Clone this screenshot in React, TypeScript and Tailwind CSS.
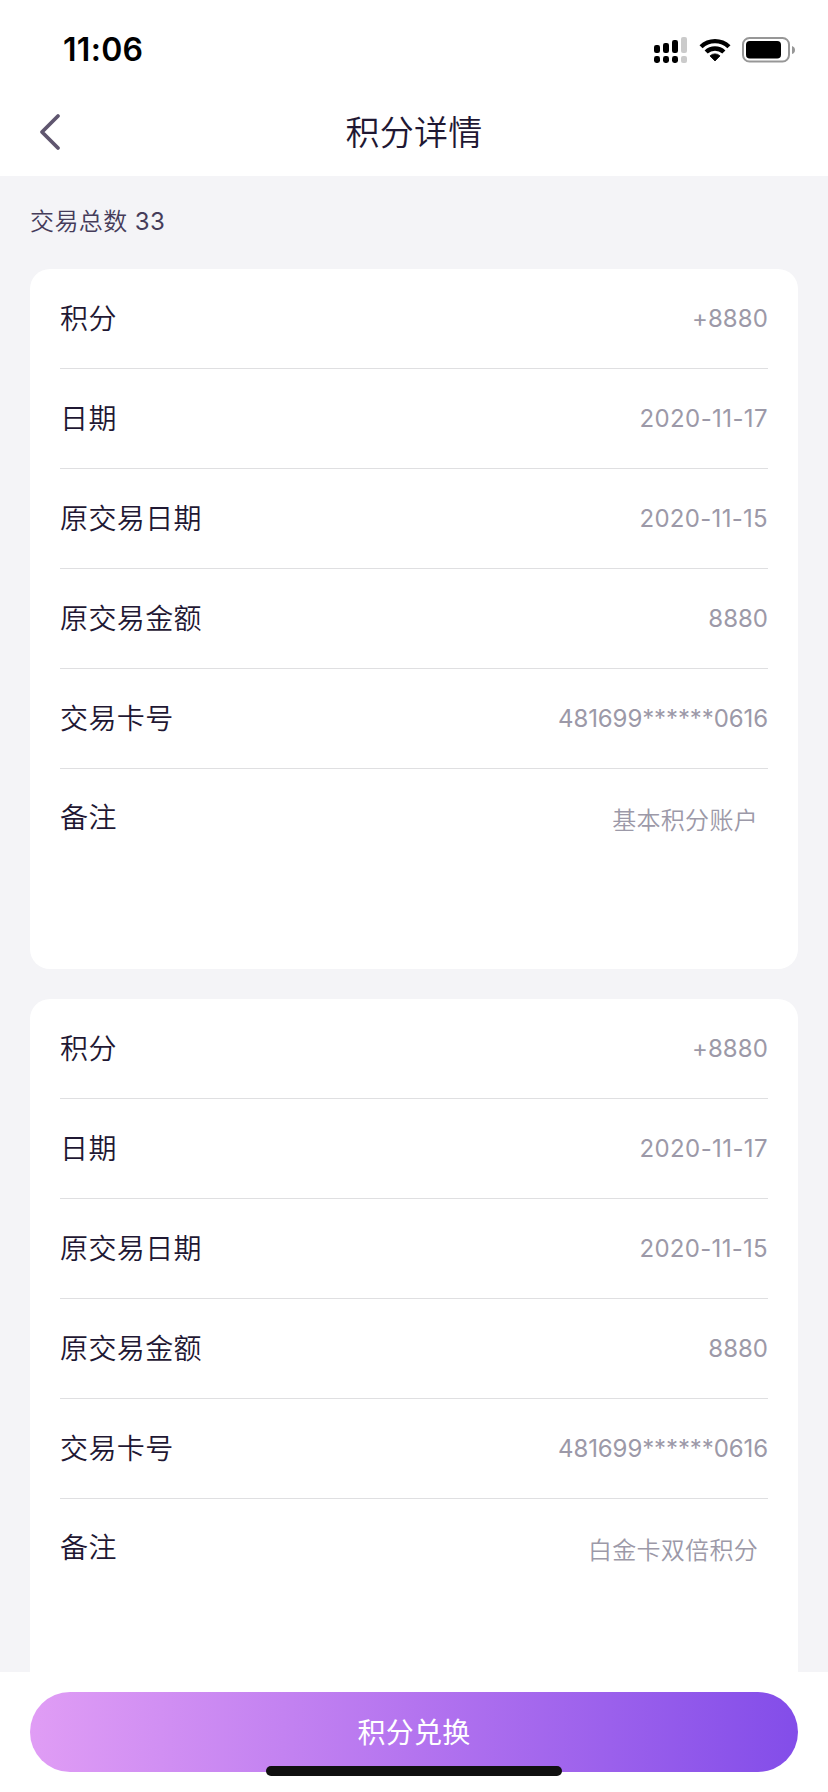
type PointRecord = {
  points: string
  date: string
  originDate: string
  amount: string
  card: string
  remark: string
}

const records: PointRecord[] = [
  {
    points: "+8880",
    date: "2020-11-17",
    originDate: "2020-11-15",
    amount: "8880",
    card: "481699******0616",
    remark: "基本积分账户",
  },
  {
    points: "+8880",
    date: "2020-11-17",
    originDate: "2020-11-15",
    amount: "8880",
    card: "481699******0616",
    remark: "白金卡双倍积分",
  },
]

function SignalIcon() {
  return (
    <svg width="33" height="26" viewBox="0 0 33 26">
      <g fill="#000">
        <rect x="0" y="8" width="6" height="8" rx="2.2" />
        <rect x="9" y="6" width="6" height="10" rx="2.2" />
        <rect x="18" y="3" width="6" height="13" rx="2.2" />
        <rect x="0" y="19" width="6" height="7" rx="2.4" />
        <rect x="9" y="19" width="6" height="7" rx="2.4" />
        <rect x="18" y="19" width="6" height="7" rx="2.4" />
      </g>
      <g fill="#cbcbcb">
        <rect x="27" y="0" width="6" height="16" rx="2" />
        <rect x="27" y="19" width="6" height="7" rx="2" />
      </g>
    </svg>
  )
}

function WifiIcon() {
  return (
    <svg width="32" height="24" viewBox="0 0 32 24">
      <path d="M0.5 7.2A22.3 22.3 0 0 1 31.5 7.2L28.4 10.3A17.9 17.9 0 0 0 3.6 10.3Z" />
      <path d="M5.6 12.5A15 15 0 0 1 26.4 12.5L23.3 15.6A10.6 10.6 0 0 0 8.7 15.6Z" />
      <path d="M11 17.9A7.2 7.2 0 0 1 21 17.9L16 23Z" stroke="#000" strokeWidth="0.8" strokeLinejoin="round" />
    </svg>
  )
}

function BatteryIcon() {
  return (
    <svg width="54" height="26" viewBox="0 0 54 26">
      <rect x="1" y="1" width="46" height="23.5" rx="6.5" fill="none" stroke="#979797" strokeWidth="2" />
      <rect x="4" y="4" width="35" height="17.5" rx="3.8" fill="#000" />
      <path d="M50 9Q53 10 53 13Q53 16 50 17Z" fill="#979797" />
    </svg>
  )
}

function Header() {
  return (
    <header className="h-[176px] bg-white">
      <div className="flex h-[88px] items-center justify-between pl-[63px] pr-8 pt-[11px]">
        <span className="text-[32px] font-semibold leading-none tracking-[0.3px] text-black">11:06</span>
        <div className="flex items-center">
          <SignalIcon />
          <div className="ml-3">
            <WifiIcon />
          </div>
          <div className="ml-[11px]">
            <BatteryIcon />
          </div>
        </div>
      </div>
      <div className="grid h-[88px] grid-cols-[100px_1fr_100px] items-center">
        <svg className="ml-[38px]" width="24" height="38" viewBox="0 0 24 38">
          <path
            d="M20 3L4 19L20 35"
            fill="none"
            stroke="#5f566f"
            strokeWidth="3.8"
            strokeLinecap="round"
            strokeLinejoin="round"
          />
        </svg>
        <h1 className="pt-0.5 text-center text-[34px] font-[350] leading-none tracking-[0.2px] text-[#1f1833]">
          积分详情
        </h1>
      </div>
    </header>
  )
}

function Row({ label, value, valueClass = "" }: { label: string; value: string; valueClass?: string }) {
  return (
    <div className="flex h-[100px] items-center justify-between border-b border-[#dfdfe1]">
      <span className="pt-px text-[28px] tracking-[0.4px] text-[#1f1833]">{label}</span>
      <span className={`text-2xl font-normal text-[#9c99a8] ${valueClass}`}>{value}</span>
    </div>
  )
}

function RecordCard({ record }: { record: PointRecord }) {
  return (
    <section className="h-[700px] shrink-0 rounded-[20px] bg-white px-[30px] font-[350]">
      <Row label="积分" value={record.points} valueClass="tracking-[0.1px]" />
      <Row label="日期" value={record.date} valueClass="tracking-[0.4px]" />
      <Row label="原交易日期" value={record.originDate} valueClass="tracking-[0.3px]" />
      <Row label="原交易金额" value={record.amount} />
      <Row label="交易卡号" value={record.card} valueClass="tracking-[-0.1px]" />
      <div className="flex items-start justify-between pr-2.5 pt-7">
        <span className="text-[28px] leading-[42px] tracking-[0.4px] text-[#1f1833]">备注</span>
        <span className="pt-[3px] text-2xl leading-[42px] tracking-[0.3px] text-[#9c99a8]">{record.remark}</span>
      </div>
    </section>
  )
}

export default function App() {
  return (
    <div className="flex h-[1792px] w-[828px] flex-col overflow-hidden bg-[#f4f4f7] font-['Inter','Noto_Sans_CJK_SC',sans-serif]">
      <Header />
      <main className="flex min-h-0 flex-1 flex-col overflow-hidden px-[30px]">
        <p className="h-[93px] shrink-0 pt-7 text-2xl font-[350] leading-9 tracking-[0.4px] text-[#453c5a]">
          交易总数 <span className="font-normal">33</span>
        </p>
        <div className="flex flex-col gap-[30px]">
          {records.map((record, i) => (
            <RecordCard key={i} record={record} />
          ))}
        </div>
      </main>
      <footer className="relative h-[120px] bg-white px-[30px] pt-5">
        <button className="flex h-20 w-full items-center justify-center rounded-full bg-linear-to-r/srgb from-[#e09df5] via-[#b474ef] to-[#834de9] pt-px text-[28px] tracking-[0.2px] text-white">
          积分兑换
        </button>
        <div className="absolute bottom-4 left-1/2 h-[10px] w-[296px] -translate-x-1/2 rounded-full bg-[#101010]" />
      </footer>
    </div>
  )
}
